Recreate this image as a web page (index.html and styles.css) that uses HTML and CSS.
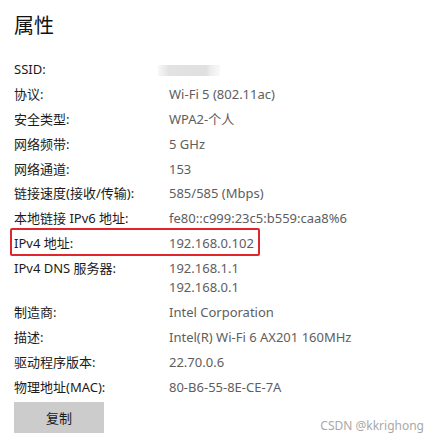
FILE: index.html
```html
<!DOCTYPE html>
<html lang="zh-CN">
<head>
  <meta charset="UTF-8" />
  <meta name="viewport" content="width=device-width, initial-scale=1.0"/>
  <title>属性</title>
  <link rel="stylesheet" href="styles.css">
</head>
<body>
  <div class="panel">
    <h1 class="title">属性</h1>
    <div class="props">
      <div class="row"><span class="label">SSID:</span><span class="value"><span class="ssid-mask"></span></span></div>
      <div class="row"><span class="label">协议:</span><span class="value">Wi-Fi 5 (802.11ac)</span></div>
      <div class="row"><span class="label">安全类型:</span><span class="value">WPA2-个人</span></div>
      <div class="row"><span class="label">网络频带:</span><span class="value">5 GHz</span></div>
      <div class="row"><span class="label">网络通道:</span><span class="value">153</span></div>
      <div class="row"><span class="label">链接速度(接收/传输):</span><span class="value">585/585 (Mbps)</span></div>
      <div class="row"><span class="label">本地链接 IPv6 地址:</span><span class="value">fe80::c999:23c5:b559:caa8%6</span></div>
      <div class="row marked"><span class="label">IPv4 地址:</span><span class="value">192.168.0.102</span></div>
      <div class="row"><span class="label">IPv4 DNS 服务器:</span><span class="value">192.168.1.1<br>192.168.0.1</span></div>
      <div class="row"><span class="label">制造商:</span><span class="value">Intel Corporation</span></div>
      <div class="row"><span class="label">描述:</span><span class="value">Intel(R) Wi-Fi 6 AX201 160MHz</span></div>
      <div class="row"><span class="label">驱动程序版本:</span><span class="value">22.70.0.6</span></div>
      <div class="row"><span class="label">物理地址(MAC):</span><span class="value">80-B6-55-8E-CE-7A</span></div>
    </div>
    <button class="copy-btn" type="button">复制</button>
  </div>
  <div class="watermark">CSDN @kkrighong</div>
</body>
</html>
```

FILE: styles.css
```css
:root {
  --label: #1b1b1b;
  --value: #5e5e5e;
  --red: #e0262a;
  --btn: #cccccc;
}

body, html {
  margin: 0;
  padding: 0;
  background: #ffffff;
  font-family: "Noto Sans", "Noto Sans CJK SC", sans-serif;
}

body {
  position: relative;
  width: 437px;
  height: 444px;
  overflow: hidden;
}

.panel {
  padding: 13px 0 0 14px;
}

.title {
  margin: 0 0 21px 0;
  font-size: 20px;
  line-height: 26px;
  font-weight: 400;
  color: #111;
}

.props {
  display: flex;
  flex-direction: column;
  gap: 5.9px;
}

.row {
  display: grid;
  grid-template-columns: 155px 1fr;
  font-size: 13px;
  line-height: 19px;
}

.label {
  color: var(--label);
}

.value {
  color: var(--value);
}

.ssid-mask {
  display: inline-block;
  vertical-align: middle;
  width: 62px;
  height: 11px;
  margin-left: -11px;
  background: linear-gradient(90deg, rgba(232,232,232,0.3) 0%, #e2e2e2 18%, #e0e0e0 78%, #ededed 85%, rgba(240,240,240,0.4) 100%);
}

.marked {
  position: relative;
}

.marked::after {
  content: "";
  position: absolute;
  left: -4px;
  top: -6px;
  width: 246px;
  height: 24px;
  border: 2px solid var(--red);
  border-radius: 2px;
}

.copy-btn {
  margin-top: 5px;
  width: 90px;
  height: 31px;
  border: none;
  background: var(--btn);
  color: var(--label);
  font-family: inherit;
  font-size: 13px;
  padding: 0;
}

.watermark {
  position: absolute;
  right: 13px;
  bottom: 10px;
  font-size: 12px;
  color: #9a9a9a;
  opacity: 0.85;
}
```
